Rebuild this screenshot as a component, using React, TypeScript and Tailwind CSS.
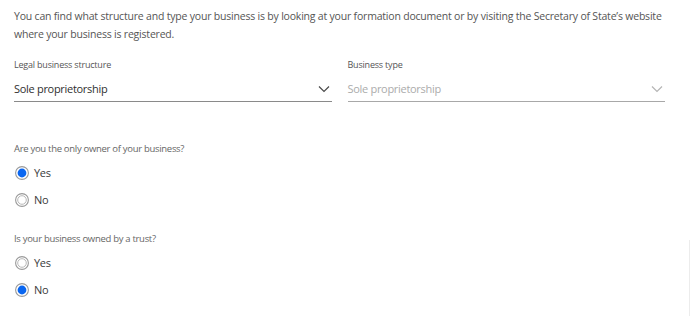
import React, { useState } from "react";

const font = { fontFamily: '"Open Sans", "Noto Sans", Arial, sans-serif' };

const Chevron = ({ light }: { light?: boolean }) => (
    <svg width="12" height="8" viewBox="0 0 12 8" fill="none">
        <path
            d="M1 1.5 L6 6.5 L11 1.5"
            stroke={light ? "#b5b5b5" : "#4a4a4a"}
            strokeWidth="1.2"
        />
    </svg>
);

const Radio = ({ checked }: { checked: boolean }) => (
    <svg width="14" height="14" viewBox="0 0 14 14">
        <circle cx="7" cy="7" r="6.4" fill="white" stroke="#9a9a9a" strokeWidth="1.1" />
        {checked ? (
            <circle cx="7" cy="7" r="4.4" fill="#0a66f0" />
        ) : (
            <circle cx="7" cy="7" r="4.3" fill="white" stroke="#b8b8b8" strokeWidth="1" />
        )}
    </svg>
);

const RadioGroup: React.FC<{ question: string; value: string; onChange: (v: string) => void }> = ({
    question,
    value,
    onChange,
}) => (
    <div className="flex flex-col">
        <p className="text-[9.5px] leading-[14px] tracking-[-0.3px] text-[#666]">{question}</p>
        <div className="mt-[8px] flex flex-col gap-[9px]">
            {["Yes", "No"].map((opt) => (
                <label
                    key={opt}
                    className="flex h-[18px] cursor-pointer items-center gap-[5px] pl-[1px]"
                    onClick={() => onChange(opt)}
                >
                    <Radio checked={value === opt} />
                    <span className="text-[11px] leading-[18px] tracking-[-0.3px] text-[#3a3a3a]">{opt}</span>
                </label>
            ))}
        </div>
    </div>
);

export default function App() {
    const [owner, setOwner] = useState("Yes");
    const [trust, setTrust] = useState("No");

    return (
        <div className="relative h-[316px] w-[690px] overflow-hidden bg-white pl-[14px] pr-[25px] pt-[7px]" style={font}>
            <p className="text-[10.5px] leading-[18px] tracking-[-0.2px] text-[#555]">
                You can find what structure and type your business is by looking at your formation document or by visiting the Secretary of State’s website where your business is registered.
            </p>

            {/* Selects */}
            <div className="mt-[15px] grid grid-cols-2 gap-[16px]">
                <div className="flex flex-col">
                    <span className="text-[9px] leading-[14px] tracking-[-0.2px] text-[#555]">Legal business structure</span>
                    <div className="mt-[8px] flex items-center justify-between border-b border-[#8a8a8a] pb-[3px] pr-[2px]">
                        <span className="text-[11px] leading-[18px] tracking-[-0.3px] text-[#2f2f2f]">Sole proprietorship</span>
                        <Chevron />
                    </div>
                </div>
                <div className="flex flex-col">
                    <span className="text-[9px] leading-[14px] tracking-[-0.2px] text-[#555]">Business type</span>
                    <div className="mt-[8px] flex items-center justify-between border-b border-[#a8a8a8] pb-[3px] pr-[2px]">
                        <span className="text-[11px] leading-[18px] tracking-[-0.3px] text-[#ababab]">Sole proprietorship</span>
                        <Chevron light />
                    </div>
                </div>
            </div>

            <div className="mt-[40px]">
                <RadioGroup question="Are you the only owner of your business?" value={owner} onChange={setOwner} />
            </div>
            <div className="mt-[23px]">
                <RadioGroup question="Is your business owned by a trust?" value={trust} onChange={setTrust} />
            </div>

            {/* faint edge of a panel on the right */}
            <div className="absolute bottom-0 right-0 h-[76px] w-px bg-[#ececec]" />
        </div>
    );
}
